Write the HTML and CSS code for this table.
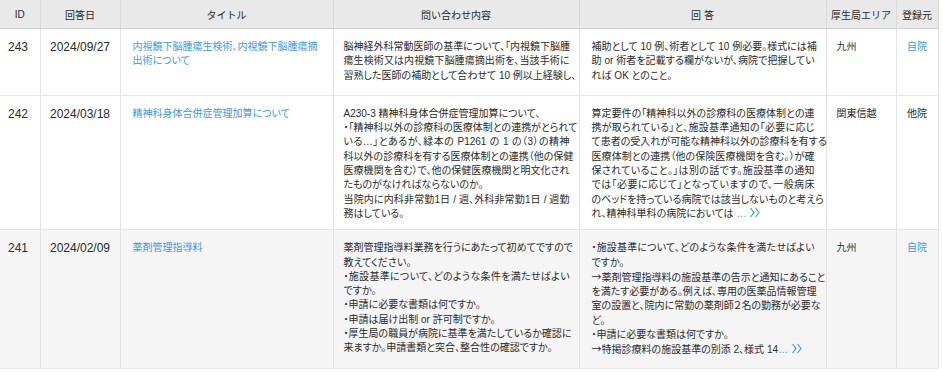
FILE: index.html
```html
<!DOCTYPE html>
<html lang="ja">
<head>
<meta charset="utf-8">
<title>Q&amp;A</title>
<link rel="stylesheet" href="styles.css">
</head>
<body>
<table class="qa">
  <colgroup>
    <col class="c-id"><col class="c-date"><col class="c-title"><col class="c-q"><col class="c-a"><col class="c-area"><col class="c-src">
  </colgroup>
  <thead>
    <tr>
      <th>ID</th><th>回答日</th><th>タイトル</th><th>問い合わせ内容</th><th>回 答</th><th>厚生局エリア</th><th>登録元</th>
    </tr>
  </thead>
  <tbody>
    <tr class="r1">
      <td class="id">243</td>
      <td class="date">2024/09/27</td>
      <td class="title"><a href="#">内視鏡下脳腫瘍生検術、内視鏡下脳腫瘍摘<br>出術について</a></td>
      <td class="q">
        <span class="ln j">脳神経外科常動医師の基準について、「内視鏡下脳腫</span>
        <span class="ln j">瘍生検術又は内視鏡下脳腫瘍摘出術を、当該手術に</span>
        <span class="ln j">習熟した医師の補助として合わせて 10 例以上経験し、</span>
      </td>
      <td class="a">
        <span class="ln j">補助として 10 例、術者として 10 例必要。様式には補</span>
        <span class="ln j">助 or 術者を記載する欄がないが、病院で把握してい</span>
        <span class="ln">れば OK とのこと。</span>
      </td>
      <td class="area">九州</td>
      <td class="src"><a href="#">自院</a></td>
    </tr>
    <tr class="r2">
      <td class="id">242</td>
      <td class="date">2024/03/18</td>
      <td class="title"><a href="#">精神科身体合併症管理加算について</a></td>
      <td class="q">
        <span class="ln">A230-3 精神科身体合併症管理加算について、</span>
        <span class="ln j">・「精神科以外の診療科の医療体制との連携がとられて</span>
        <span class="ln j">いる…」とあるが、緑本の P1261 の 1 の（3）の精神</span>
        <span class="ln j">科以外の診療科を有する医療体制との連携（他の保健</span>
        <span class="ln j">医療機関を含む）で、他の保健医療機関と明文化され</span>
        <span class="ln">たものがなければならないのか。</span>
        <span class="ln j">当院内に内科非常勤1日 / 週、外科非常勤1日 / 週勤</span>
        <span class="ln">務はしている。</span>
      </td>
      <td class="a">
        <span class="ln j">算定要件の「精神科以外の診療科の医療体制との連</span>
        <span class="ln j">携が取られている」と、施設基準通知の「必要に応じ</span>
        <span class="ln j">て患者の受入れが可能な精神科以外の診療科を有する</span>
        <span class="ln j">医療体制との連携（他の保険医療機関を含む。）が確</span>
        <span class="ln j">保されていること。」は別の話です。施設基準の通知</span>
        <span class="ln j">では「必要に応じて」となっていますので、一般病床</span>
        <span class="ln j">のベッドを持っている病院では該当しないものと考えら</span>
        <span class="ln">れ、精神科単科の病院においては <a href="#" class="more">…<svg class="chev" viewBox="0 0 12 11" width="12" height="11"><polyline points="1.5,1 5,5.5 1.5,10"/><polyline points="6.5,1 10,5.5 6.5,10"/></svg></a></span>
      </td>
      <td class="area">関東信越</td>
      <td class="src">他院</td>
    </tr>
    <tr class="r3">
      <td class="id">241</td>
      <td class="date">2024/02/09</td>
      <td class="title"><a href="#">薬剤管理指導料</a></td>
      <td class="q">
        <span class="ln j">薬剤管理指導料業務を行うにあたって初めてですので</span>
        <span class="ln">教えてください。</span>
        <span class="ln j">・施設基準について、どのような条件を満たせばよい</span>
        <span class="ln">ですか。</span>
        <span class="ln">・申請に必要な書類は何ですか。</span>
        <span class="ln">・申請は届け出制 or 許可制ですか。</span>
        <span class="ln j">・厚生局の職員が病院に基準を満たしているか確認に</span>
        <span class="ln">来ますか。申請書類と突合、整合性の確認ですか。</span>
      </td>
      <td class="a">
        <span class="ln j">・施設基準について、どのような条件を満たせばよい</span>
        <span class="ln">ですか。</span>
        <span class="ln j"><span class="arw">→</span>薬剤管理指導料の施設基準の告示と通知にあること</span>
        <span class="ln j">を満たす必要がある。例えば、専用の医薬品情報管理</span>
        <span class="ln j">室の設置と、院内に常勤の薬剤師２名の勤務が必要な</span>
        <span class="ln">ど。</span>
        <span class="ln">・申請に必要な書類は何ですか。</span>
        <span class="ln"><span class="arw">→</span>特掲診療料の施設基準の別添 2、様式 14<a href="#" class="more">…<svg class="chev" viewBox="0 0 12 11" width="12" height="11"><polyline points="1.5,1 5,5.5 1.5,10"/><polyline points="6.5,1 10,5.5 6.5,10"/></svg></a></span>
      </td>
      <td class="area">九州</td>
      <td class="src"><a href="#">自院</a></td>
    </tr>
  </tbody>
</table>
</body>
</html>
```
FILE: styles.css
```css
body {
  margin: 0;
  background: #ffffff;
  font-family: "Liberation Sans", "Noto Sans CJK JP", sans-serif;
  color: #2a2a2a;
}

a {
  color: #3d9ae0;
  text-decoration: none;
}

.qa {
  border-collapse: collapse;
  table-layout: fixed;
  width: 938px;
}

.c-id { width: 40px; }
.c-date { width: 80px; }
.c-title { width: 213px; }
.c-q { width: 246px; }
.c-a { width: 247px; }
.c-area { width: 70px; }
.c-src { width: 42px; }

.qa th {
  background: #e9e9e9;
  font-weight: normal;
  font-size: 10px;
  color: #2a2a2a;
  height: 28px;
  padding: 0;
  text-align: center;
  white-space: nowrap;
  border-left: 1px solid #d9d9d9;
  border-bottom: 1px solid #d2d2d2;
}

.qa th:first-child { border-left: none; }
.qa th:last-child { border-right: 1px solid #d9d9d9; }

.qa td {
  vertical-align: top;
  padding: 11px 10px 8px;
  font-size: 10px;
  line-height: 14.3px;
  border-left: 1px solid #e3e3e3;
  border-bottom: 1px solid #e6e6e6;
  font-feature-settings: "palt";
}

.qa td:first-child { border-left: none; }
.qa td:last-child { border-right: 1px solid #e0e0e0; }

.r1 td { padding-bottom: 12px; }
.r3 td { padding-bottom: 10px; background: #f5f5f5; }

.qa td.id {
  font-size: 12px;
  padding-left: 8px;
  padding-right: 0;
}

.qa td.date {
  font-size: 12px;
  text-align: center;
  padding-left: 0;
  padding-right: 0;
}

.qa td.title {
  padding-left: 12px;
  padding-right: 8px;
}

.qa td.q {
  padding-left: 10px;
  padding-right: 9px;
}

.qa td.a {
  padding-left: 12px;
  padding-right: 11px;
}

.qa td.area {
  padding-left: 10px;
  padding-right: 4px;
}

.qa td.src {
  text-align: center;
  padding-left: 0;
  padding-right: 0;
}

.ln {
  display: block;
  white-space: nowrap;
}

.ln.j {
  text-align: justify;
  text-align-last: justify;
}

.arw {
  font-family: "Noto Sans CJK JP", sans-serif;
}

.more {
  white-space: nowrap;
}

.chev {
  display: inline-block;
  vertical-align: -1px;
  margin-left: 3px;
  fill: none;
  stroke: #3d9ae0;
  stroke-width: 1.2;
}
```
